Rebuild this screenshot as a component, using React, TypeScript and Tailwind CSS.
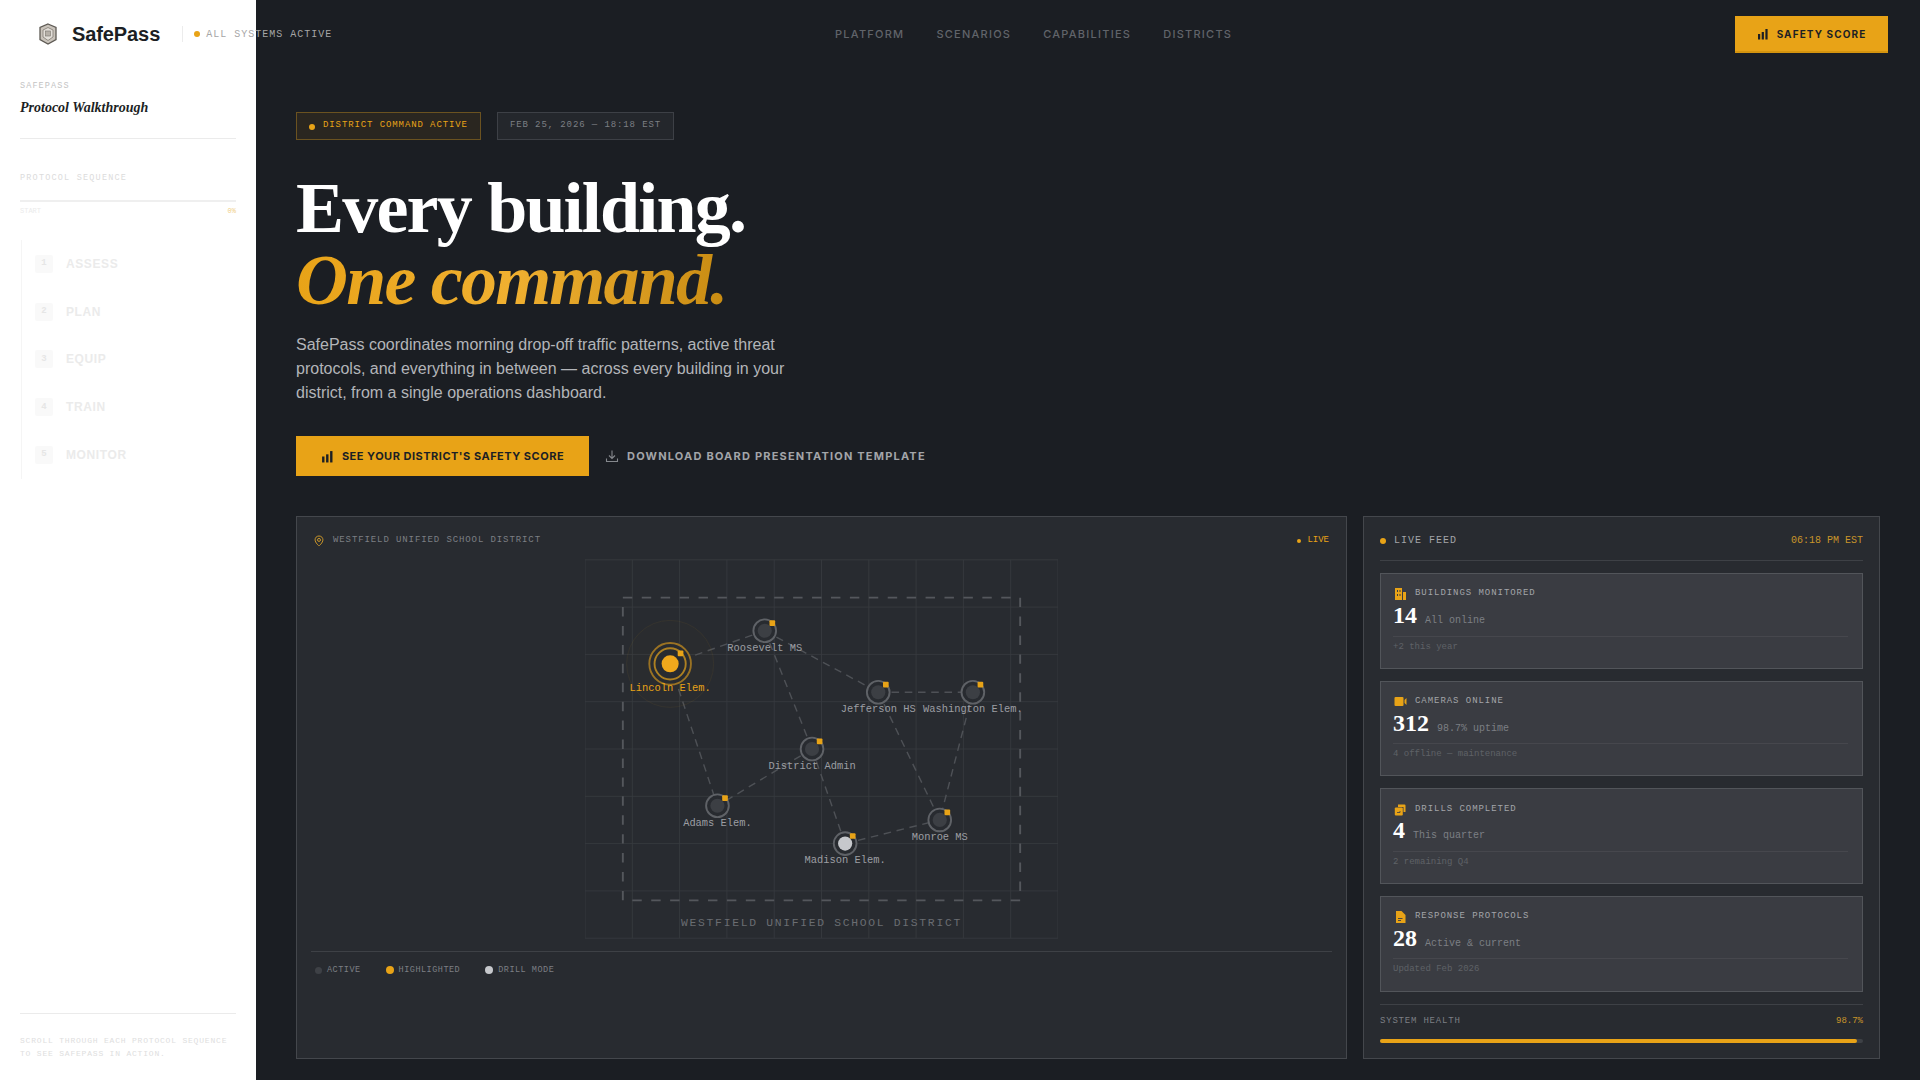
import React from "react";

const MONO = "font-['Liberation_Mono',monospace]";
const nodes: [string, number, number, number][] = [
  ["Roosevelt MS", 190, 75, 21],
  ["Jefferson HS", 310, 140, 21],
  ["Washington Elem.", 410, 140, 21],
  ["District Admin", 240, 200, 21],
  ["Adams Elem.", 140, 260, 21],
  ["Monroe MS", 375, 275, 21],
  ["Madison Elem.", 275, 300, 21],
];
const links: [number, number, number, number][] = [
  [90, 110, 190, 75],
  [190, 75, 310, 140],
  [190, 75, 240, 200],
  [310, 140, 410, 140],
  [310, 140, 375, 275],
  [410, 140, 375, 275],
  [240, 200, 140, 260],
  [240, 200, 275, 300],
  [90, 110, 140, 260],
  [275, 300, 375, 275],
];

function BarIcon({ className }: { className: string }) {
  return (
    <svg viewBox="0 0 12 12" className={className} fill="#1c1f24">
      <rect x="1" y="6" width="2.2" height="5.5" />
      <rect x="4.7" y="4" width="2.2" height="7.5" />
      <rect x="8.4" y="1" width="2.2" height="10.5" />
    </svg>
  );
}

function MapSvg() {
  const lines = [];
  for (let i = 0; i <= 10; i++) lines.push(<line key={"v" + i} x1={i * 50} y1={0} x2={i * 50} y2={400} />);
  for (let i = 0; i <= 8; i++) lines.push(<line key={"h" + i} x1={0} y1={i * 50} x2={500} y2={i * 50} />);
  return (
    <svg viewBox="0 0 500 400" className="w-[473px] h-[380px] block">
      <g stroke="#383b40" strokeWidth="0.9">{lines}</g>
      <rect x="40" y="40" width="420" height="320" fill="none" stroke="#54575c" strokeWidth="2" strokeDasharray="10 10" />
      <g stroke="#4e5156" strokeWidth="1.5" strokeDasharray="8 6">
        {links.map((l, i) => (
          <line key={i} x1={l[0]} y1={l[1]} x2={l[2]} y2={l[3]} />
        ))}
      </g>
      <circle cx="90" cy="110" r="46" fill="#e8a317" fillOpacity="0.012" stroke="#e8a317" strokeOpacity="0.07" />
      <circle cx="90" cy="110" r="22" fill="#282b30" stroke="#a67a22" strokeOpacity="0.9" strokeWidth="2" />
      <circle cx="90" cy="110" r="16.5" fill="none" stroke="#c48f20" strokeOpacity="0.85" strokeWidth="2" />
      <circle cx="90" cy="110" r="9" fill="#f0a81c" />
      <rect x="98" y="96" width="6" height="6" rx="1" fill="#e8a317" />
      <text x="90" y="139" textAnchor="middle" fontSize="11" fontFamily="Liberation Mono, monospace" fill="#e8a317">Lincoln Elem.</text>
      {nodes.map(([name, x, y, off]) => (
        <g key={name}>
          <circle cx={x} cy={y} r="12" fill="#282b30" stroke="#5f6267" strokeWidth="2" />
          <circle cx={x} cy={y} r="7.5" fill={name === "Madison Elem." ? "#c6c8cc" : "#3c3f44"} />
          <rect x={x + 5} y={y - 11} width="6" height="6" rx="1" fill="#e8a317" />
          <text x={x} y={y + off} textAnchor="middle" fontSize="11" fontFamily="Liberation Mono, monospace" fill="#9c9ea3">{name}</text>
        </g>
      ))}
      <text x="250" y="387" textAnchor="middle" fontSize="12" letterSpacing="1.8" fontFamily="Liberation Mono, monospace" fill="#6a6d72">WESTFIELD UNIFIED SCHOOL DISTRICT</text>
    </svg>
  );
}

function Stat({ icon, label, value, sub, note }: { icon: React.ReactNode; label: string; value: string; sub: string; note: string }) {
  return (
    <div className="h-[95.67px] border border-[#52555a] bg-[#3a3c42] px-3 pt-[12px]">
      <div className="flex items-center gap-2 h-[16px]">
        <span className="w-[14px] h-[14px] flex items-center justify-center">{icon}</span>
        <span className={`${MONO} text-[9px] tracking-[0.95px] text-[#a3a5a9] uppercase`}>{label}</span>
      </div>
      <div className="flex items-baseline gap-2 h-[28px] pt-[1px] pb-[4px]">
        <span className="font-['Liberation_Serif',serif] font-bold text-[24px] leading-[24px] text-white">{value}</span>
        <span className={`${MONO} text-[10px] text-[#7c7f84]`}>{sub}</span>
      </div>
      <div className="mr-[2px] border-t border-[#46474d] pt-[4px] mt-[5.5px]">
        <span className={`${MONO} text-[9px] block text-[#5f6267]`}>{note}</span>
      </div>
    </div>
  );
}

export default function App() {
  return (
    <div className="relative w-[1920px] h-[1080px] overflow-hidden bg-[#1b1e23] font-['Liberation_Sans',sans-serif]">
      {/* sidebar */}
      <aside className="absolute left-0 top-0 bottom-0 w-[256px] bg-white px-5 flex flex-col">
        <div className="pt-[81px]">
          <div className={`${MONO} text-[8.5px] tracking-[1.1px] text-[#c3c3c3] leading-[10px]`}>SAFEPASS</div>
          <div className="font-['Liberation_Serif',serif] italic font-bold text-[14px] text-[#1c1f24] mt-[7px] leading-[20px]">Protocol Walkthrough</div>
          <div className="border-t border-[#ebebeb] mt-[20px]" />
        </div>
        <div className="mt-[34px]">
          <div className={`${MONO} text-[8.5px] tracking-[1.2px] text-[#dcdcdc] leading-[10px]`}>PROTOCOL SEQUENCE</div>
          <div className="border-t-2 border-[#efefef] mt-[17px]" />
          <div className={`${MONO} flex justify-between text-[7px] leading-[8px] mt-[5px]`}>
            <span className="text-[#ebebeb]">START</span>
            <span className="text-[#f0cf85]">0%</span>
          </div>
        </div>
        <div className="mt-[25px] border-l border-[#f5f5f5] ml-[1px]">
          {["ASSESS", "PLAN", "EQUIP", "TRAIN", "MONITOR"].map((s, i) => (
            <div key={s} className="h-[47.8px] flex items-center pl-[13px] gap-[13px]">
              <span className={`${MONO} w-[18px] h-[18px] rounded-[2px] bg-[#f9f9f9] flex items-center justify-center text-[9px] font-bold text-[#e6e6e6]`}>{i + 1}</span>
              <span className="text-[12px] font-bold tracking-[0.6px] text-[#ebebeb]">{s}</span>
            </div>
          ))}
        </div>
        <div className="mt-auto pb-[20px]">
          <div className="border-t border-[#ebebeb] mb-[20px]" />
          <div className={`${MONO} text-[8px] tracking-[0.8px] leading-[13px] text-[#dedede]`}>SCROLL THROUGH EACH PROTOCOL SEQUENCE TO SEE SAFEPASS IN ACTION.</div>
        </div>
      </aside>

      {/* nav */}
      <header className="absolute left-0 right-0 top-0 h-[68px] flex items-center pl-[39px] pr-[32px]">
        <svg viewBox="0 0 18 22" className="w-[18px] h-[22px] mr-[15px]">
          <path d="M9 1 L17 4.5 L17 16.5 L9 21 L1 16.5 L1 4.5 Z" fill="#c9c3bb" stroke="#5e5a54" strokeWidth="1.3" />
          <path d="M9 4.5 L14 7 L14 14 L9 17.5 L4 14 L4 7 Z" fill="#e3dfd9" stroke="#8a857d" strokeWidth="0.9" />
          <rect x="6.6" y="8" width="4.8" height="5" fill="#b6b0a8" stroke="#77726b" strokeWidth="0.6" />
        </svg>
        <span className="text-[20px] font-bold text-[#1c1f24] tracking-[-0.1px]">SafePass</span>
        <span className="w-px h-[16px] bg-[#ececec] ml-[21.5px] mr-[11.5px]" />
        <span className="w-[6px] h-[6px] rounded-full bg-[#e8a317] mr-[6px]" />
        <span className={`${MONO} text-[10px] tracking-[1px] text-[#a6a6a6]`}>ALL SYSTEMS ACTIVE</span>
        <nav className="absolute left-[835px] top-0 h-[68px] flex items-center gap-[32px] font-['Inter',sans-serif] text-[11px] font-medium tracking-[1.25px] text-[#61646a]">
          <span>PLATFORM</span>
          <span>SCENARIOS</span>
          <span>CAPABILITIES</span>
          <span>DISTRICTS</span>
        </nav>
        <button className="ml-auto h-[37px] w-[153px] bg-[#e8a317] border-b-2 border-[#d4940f] pt-[2px] flex items-center justify-center gap-[8px] font-['Inter',sans-serif] text-[10px] font-bold tracking-[1.1px] text-[#1c1f24]">
          <BarIcon className="w-[12px] h-[12px]" />
          SAFETY SCORE
        </button>
      </header>

      {/* main */}
      <main className="ml-[256px] pl-[40px] pr-[40px] pt-[112px] h-full flex flex-col">
        <div className={`${MONO} flex gap-4 text-[9px] tracking-[0.9px]`}>
          <div className="h-[28px] w-[185px] border border-[#6b5220] bg-[#2a2620] flex items-center pl-[12px] gap-[8px] text-[#e8a317]">
            <span className="w-[6px] h-[6px] rounded-full bg-[#e8a317] mt-[1px]" />
            DISTRICT COMMAND ACTIVE
          </div>
          <div className="h-[28px] w-[177px] border border-[#3d4046] bg-[#24272c] flex items-center justify-center text-[#7c7f84]">
            FEB 25, 2026 — 18:18 EST
          </div>
        </div>

        <h1 className="font-['Liberation_Serif',serif] font-bold text-[72px] leading-[72px] tracking-[-1.8px] mt-[32px]">
          <span className="block text-white">Every building.</span>
          <span className="block w-fit italic bg-gradient-to-r from-[#e8a317] via-[#f0b030] to-[#c98c12] bg-clip-text text-transparent">One command.</span>
        </h1>

        <p className="mt-[16.5px] w-[520px] text-[16px] leading-[24px] text-[#b3b5b9]">
          SafePass coordinates morning drop-off traffic patterns, active threat protocols, and everything in between — across every building in your district, from a single operations dashboard.
        </p>

        <div className="mt-[31.5px] flex items-center gap-[16px] font-['Inter',sans-serif] text-[11px] font-bold">
          <button className="h-[40px] w-[293px] bg-[#e8a317] flex items-center justify-center gap-[8px] tracking-[0.5px] text-[#1c1f24]">
            <BarIcon className="w-[13px] h-[13px]" />
            SEE YOUR DISTRICT'S SAFETY SCORE
          </button>
          <span className="flex items-center gap-[8px] text-[#a3a5a9] tracking-[1.2px]">
            <svg viewBox="0 0 14 14" className="w-[14px] h-[14px]" fill="none" stroke="#85888d" strokeWidth="1.1">
              <path d="M7 1.5V9M4 6.5l3 3 3-3M1.5 9.5v3h11v-3" />
            </svg>
            DOWNLOAD BOARD PRESENTATION TEMPLATE
          </span>
        </div>

        <div className="mt-[40px] flex gap-[16px] h-[543px]">
          {/* map */}
          <section className="w-[1051px] shrink-0 border border-[#44474c] bg-[#282b30] px-[14px] flex flex-col">
            <div className="h-[42px] flex items-center justify-between pt-[5px] px-[3px]">
              <div className={`${MONO} flex items-center gap-[9px] text-[9px] tracking-[0.9px] text-[#7c7f84]`}>
                <svg viewBox="0 0 12 14" className="w-[10px] h-[12px]" fill="none" stroke="#c8952a" strokeWidth="1.2">
                  <path d="M6 1c3 0 4.7 2.2 4.7 4.6C10.7 9 6 13 6 13S1.3 9 1.3 5.6C1.3 3.2 3 1 6 1z" />
                  <circle cx="6" cy="5.7" r="1.8" />
                </svg>
                WESTFIELD UNIFIED SCHOOL DISTRICT
              </div>
              <div className={`${MONO} flex items-center gap-[6px] text-[9px] text-[#e8a317]`}>
                <span className="w-[4px] h-[4px] rounded-full bg-[#e8a317]" />
                LIVE
              </div>
            </div>
            <div className="flex justify-center">
              <MapSvg />
            </div>
            <div className={`${MONO} border-t border-[#3e4146] mt-[12px] pt-[12px] px-[4px] flex gap-[25px] text-[8.5px] tracking-[0.5px] text-[#7c7f84]`}>
              <span className="flex items-center gap-[5px]"><i className="w-[7px] h-[7px] rounded-full bg-[#3e4146]" />ACTIVE</span>
              <span className="flex items-center gap-[5px]"><i className="w-[8px] h-[8px] rounded-full bg-[#e8a317]" />HIGHLIGHTED</span>
              <span className="flex items-center gap-[5px]"><i className="w-[8px] h-[8px] rounded-full bg-[#c6c8cc]" />DRILL MODE</span>
            </div>
          </section>

          {/* feed */}
          <section className="flex-1 border border-[#44474c] bg-[#282b30] px-[16px] flex flex-col">
            <div className={`${MONO} h-[44px] shrink-0 pt-[4px] flex items-center justify-between border-b border-[#3e4146] text-[10px] tracking-[1px]`}>
              <span className="flex items-center gap-[8px] text-[#a3a5a9]">
                <span className="w-[6px] h-[6px] rounded-full bg-[#e8a317]" />
                LIVE FEED
              </span>
              <span className="text-[#c8952a] tracking-[0px]">06:18 PM EST</span>
            </div>
            <div className="mt-[12px] flex flex-col gap-[12px]">
              <Stat
                label="Buildings Monitored" value="14" sub="All online" note="+2 this year"
                icon={<svg viewBox="0 0 13 14" className="w-[13px] h-[14px]" fill="#e8a317"><path d="M1 1h7v12H1zM9 5h3v8H9z" /><path d="M3 3h1v2H3zM5.5 3h1v2h-1zM3 7h1v2H3zM5.5 7h1v2h-1z" fill="#3a3c42" /></svg>}
              />
              <Stat
                label="Cameras Online" value="312" sub="98.7% uptime" note="4 offline — maintenance"
                icon={<svg viewBox="0 0 13 11" className="w-[13px] h-[11px]" fill="#e8a317"><rect x="0.5" y="1" width="9" height="9" rx="1" /><path d="M10.5 4l2-2v7l-2-2z" /></svg>}
              />
              <Stat
                label="Drills Completed" value="4" sub="This quarter" note="2 remaining Q4"
                icon={<svg viewBox="0 0 12 13" className="w-[12px] h-[13px]" fill="#e8a317"><path d="M4 1.5h6.5a1 1 0 0 1 1 1V9H9.5V4H4z" /><rect x="0.8" y="4.5" width="8" height="8" rx="1" /><path d="M3 9.5h3V8" fill="none" stroke="#3a3c42" strokeWidth="0.8" /></svg>}
              />
              <Stat
                label="Response Protocols" value="28" sub="Active & current" note="Updated Feb 2026"
                icon={<svg viewBox="0 0 11 14" className="w-[11px] h-[14px]" fill="#e8a317"><path d="M1 1h5.5L10.5 5v8H1z" /><path d="M3 8.5h4.5M3 10.5h3" stroke="#3a3c42" strokeWidth="0.9" /></svg>}
              />
            </div>
            <div className="border-t border-[#3e4146] mt-[12px] pt-[10px]">
              <div className={`${MONO} flex justify-between text-[9px] tracking-[0.8px]`}>
                <span className="text-[#7c7f84]">SYSTEM HEALTH</span>
                <span className="text-[#c8952a] tracking-normal">98.7%</span>
              </div>
              <div className="mt-[10.5px] h-[4px] rounded-full bg-[#3e4146]">
                <div className="h-full rounded-full bg-[#e8a317]" style={{ width: "98.7%" }} />
              </div>
            </div>
          </section>
        </div>
      </main>
    </div>
  );
}
